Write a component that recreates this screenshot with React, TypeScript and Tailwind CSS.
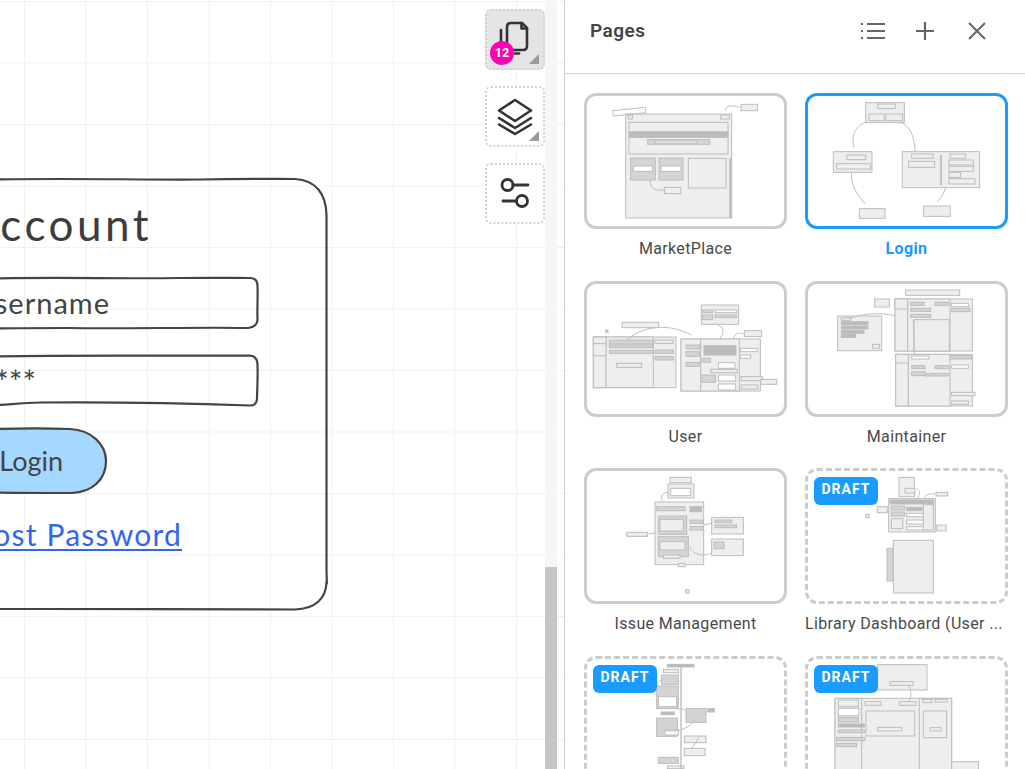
import React from "react";

type Art = {
  ox: number;
  oy: number;
  rects: number[][];
  lines?: string[];
  bars?: number[][];
};

const marketplace: Art = {
  ox: 12,
  oy: 9,
  rects: [
    [137, 72, 318, 312, 1],
    [147, 97, 297, 95, 1],
    [147, 125, 297, 17, 3],
    [203, 149, 186, 14, 2],
    [225, 153, 125, 6, 0],
    [152, 204, 74, 66, 2],
    [160, 228, 58, 16, 0],
    [237, 204, 72, 66, 2],
    [243, 228, 60, 16, 0],
    [325, 205, 113, 89, 1],
    [253, 292, 49, 19, 1],
    [483, 43, 50, 19, 1],
    [145, 75, 12, 12, 1],
    [422, 75, 26, 12, 1],
  ],
  lines: [
    "M98 62 L196 52 L198 68 L100 78 Z",
    "M436 62 C440 45 455 45 478 52",
    "M210 270 C210 300 230 302 252 300",
  ],
  bars: [[451, 205, 451, 384, 6]],
};

const login: Art = {
  ox: 15,
  oy: 9,
  rects: [
    [197, 38, 116, 60, 1],
    [234, 42, 52, 14, 1],
    [207, 72, 46, 20, 1],
    [258, 72, 50, 20, 1],
    [100, 185, 116, 62, 1],
    [141, 195, 56, 14, 1],
    [110, 221, 102, 16, 1],
    [307, 185, 232, 108, 1],
    [335, 192, 65, 13, 1],
    [326, 214, 78, 18, 1],
    [450, 192, 47, 13, 1],
    [447, 210, 73, 15, 1],
    [447, 229, 73, 15, 1],
    [447, 247, 35, 15, 1],
    [447, 266, 78, 16, 1],
    [178, 356, 77, 29, 1],
    [371, 348, 80, 31, 1],
  ],
  lines: [
    "M200 95 C160 110 155 140 162 172",
    "M300 95 C335 110 345 150 345 185",
    "M155 247 C150 290 175 315 195 342",
    "M438 290 C432 310 425 320 412 335",
  ],
  bars: [[423, 195, 423, 285, 5]],
};

const user: Art = {
  ox: 12,
  oy: 18,
  rects: [
    [40, 186, 248, 152, 1],
    [40, 186, 38, 152, 1],
    [78, 186, 142, 152, 1],
    [40, 186, 38, 20, 1],
    [40, 206, 38, 36, 1],
    [88, 195, 130, 12, 2],
    [88, 210, 130, 8, 2],
    [88, 226, 130, 9, 2],
    [110, 265, 75, 12, 1],
    [225, 195, 55, 10, 1],
    [225, 225, 55, 10, 2],
    [225, 245, 55, 10, 2],
    [126, 142, 110, 16, 1],
    [77, 165, 7, 7, 2],
    [303, 192, 238, 156, 1],
    [303, 192, 59, 156, 1],
    [362, 192, 116, 156, 1],
    [372, 212, 96, 28, 3],
    [318, 210, 40, 12, 2],
    [318, 230, 40, 14, 2],
    [318, 262, 40, 12, 2],
    [366, 250, 26, 12, 2],
    [415, 263, 50, 17, 0],
    [392, 283, 80, 10, 1],
    [366, 300, 40, 22, 2],
    [415, 300, 52, 18, 0],
    [415, 327, 52, 18, 0],
    [482, 220, 50, 10, 0],
    [482, 240, 30, 10, 0],
    [364, 90, 112, 58, 1],
    [368, 105, 30, 8, 2],
    [405, 105, 65, 8, 0],
    [405, 120, 65, 8, 2],
    [368, 120, 30, 14, 2],
    [493, 167, 52, 18, 1],
    [483, 305, 65, 12, 1],
    [542, 313, 48, 15, 1],
    [483, 330, 50, 12, 1],
  ],
  lines: [
    "M140 195 C190 150 270 145 335 180",
    "M415 150 C440 165 425 180 420 190",
    "M460 190 C465 175 480 170 492 178",
  ],
};

const maintainer: Art = {
  ox: 675,
  oy: 18,
  rects: [
    [977, 45, 162, 16, 1],
    [884, 72, 44, 24, 1],
    [945, 72, 232, 156, 1],
    [945, 72, 38, 156, 1],
    [983, 72, 127, 156, 1],
    [945, 72, 38, 30, 1],
    [992, 82, 40, 9, 2],
    [1065, 82, 40, 9, 2],
    [992, 100, 60, 9, 2],
    [992, 118, 60, 9, 2],
    [1002, 134, 106, 94, 1],
    [1115, 85, 50, 10, 0],
    [1115, 100, 55, 10, 2],
    [773, 123, 132, 104, 1],
    [784, 128, 28, 8, 1],
    [784, 140, 80, 9, 3],
    [784, 153, 80, 9, 3],
    [784, 166, 68, 9, 3],
    [784, 178, 42, 9, 3],
    [878, 208, 20, 12, 1],
    [947, 238, 230, 155, 1],
    [947, 238, 38, 155, 1],
    [985, 238, 125, 155, 1],
    [947, 238, 38, 26, 1],
    [995, 243, 52, 9, 0],
    [1110, 242, 65, 10, 2],
    [995, 272, 40, 9, 2],
    [1065, 272, 40, 9, 2],
    [995, 290, 40, 12, 2],
    [1035, 295, 70, 8, 2],
    [1115, 270, 50, 10, 0],
    [1115, 352, 70, 10, 1],
    [1115, 378, 50, 10, 1],
  ],
  lines: ["M810 130 C850 115 900 112 945 122", "M1000 135 L1003 238"],
};

const issues: Art = {
  ox: 12,
  oy: 24,
  rects: [
    [270, 52, 64, 16, 1],
    [264, 72, 78, 42, 1],
    [272, 85, 60, 22, 0],
    [225, 126, 146, 188, 1],
    [230, 140, 85, 12, 2],
    [330, 140, 35, 15, 3],
    [235, 168, 85, 55, 2],
    [240, 178, 70, 35, 1],
    [235, 230, 90, 60, 2],
    [240, 245, 75, 25, 1],
    [250, 285, 50, 10, 1],
    [295, 310, 20, 10, 1],
    [330, 180, 40, 10, 2],
    [330, 200, 40, 10, 2],
    [395, 172, 95, 50, 1],
    [405, 180, 50, 8, 2],
    [405, 195, 65, 8, 2],
    [395, 237, 95, 50, 1],
    [402, 246, 30, 20, 2],
    [140, 217, 62, 12, 1],
    [317, 389, 10, 10, 1],
  ],
  lines: [
    "M265 96 C240 100 240 115 250 125",
    "M205 222 L230 218",
    "M330 260 C335 285 370 290 395 280",
    "M370 195 L395 190",
  ],
};

const library: Art = {
  ox: 675,
  oy: 24,
  rects: [
    [957, 52, 46, 58, 1],
    [975, 85, 30, 14, 1],
    [926, 116, 140, 100, 1],
    [930, 120, 130, 12, 3],
    [892, 140, 30, 18, 1],
    [1070, 195, 28, 18, 1],
    [1030, 134, 30, 76, 1],
    [934, 138, 40, 12, 2],
    [934, 156, 40, 12, 2],
    [934, 176, 34, 30, 1],
    [980, 142, 46, 10, 3],
    [980, 160, 50, 10, 0],
    [980, 180, 50, 12, 0],
    [980, 200, 50, 10, 0],
    [1068, 97, 35, 11, 1],
    [857, 163, 10, 10, 1],
    [940, 241, 120, 158, 1],
    [921, 265, 18, 98, 2],
  ],
  lines: ["M1030 115 C1040 105 1045 100 1065 102", "M1010 85 C1022 95 1020 105 1012 115"],
};

const draftA: Art = {
  ox: 12,
  oy: 18,
  rects: [
    [262, 43, 80, 8, 3],
    [250, 58, 45, 10, 1],
    [245, 75, 50, 28, 2],
    [230, 108, 65, 68, 2],
    [235, 140, 55, 30, 0],
    [243, 186, 40, 8, 3],
    [318, 175, 60, 42, 2],
    [383, 176, 20, 10, 3],
    [230, 204, 62, 55, 2],
    [255, 240, 40, 15, 0],
    [313, 258, 65, 20, 1],
    [313, 295, 62, 22, 1],
    [235, 322, 60, 18, 2],
    [262, 348, 50, 8, 1],
  ],
  lines: [
    "M296 178 C305 175 312 178 320 185",
    "M255 242 C290 245 320 240 340 215",
    "M355 262 C350 280 340 285 335 295",
    "M245 90 C238 92 232 98 230 108",
  ],
  bars: [[303, 50, 303, 357, 4]],
};

const draftB: Art = {
  ox: 675,
  oy: 18,
  rects: [
    [893, 44, 148, 76, 1],
    [930, 95, 70, 11, 1],
    [765, 145, 350, 220, 1],
    [765, 145, 80, 220, 1],
    [1018, 145, 97, 220, 1],
    [775, 150, 60, 20, 1],
    [775, 175, 62, 22, 0],
    [775, 202, 60, 14, 2],
    [775, 222, 78, 9, 3],
    [775, 240, 78, 8, 2],
    [770, 262, 85, 10, 2],
    [770, 280, 60, 10, 2],
    [855, 155, 48, 11, 1],
    [958, 155, 50, 11, 1],
    [858, 183, 146, 75, 1],
    [893, 232, 72, 11, 1],
    [1030, 183, 70, 80, 1],
    [1050, 233, 33, 10, 1],
    [1028, 148, 28, 10, 1],
    [1065, 148, 36, 8, 1],
    [1115, 335, 80, 30, 1],
  ],
  lines: ["M985 106 C995 120 995 140 985 155"],
};

const fills = ["#ffffff", "#eeeeee", "#d4d4d4", "#bbbbbb"];

function Thumb({ art }: { art: Art }) {
  return (
    <svg
      viewBox={`${art.ox + 9} ${art.oy + 9} 591 390`}
      preserveAspectRatio="none"
      className="block h-full w-full overflow-hidden blur-[0.5px]"
    >
      {art.rects.map((r, i) => (
        <rect key={i} x={r[0]} y={r[1]} width={r[2]} height={r[3]} fill={fills[r[4]]} stroke="#bdbdbd" strokeWidth={3} />
      ))}
      {art.lines?.map((d, i) => (
        <path key={i} d={d} fill="none" stroke="#bdbdbd" strokeWidth={3} />
      ))}
      {art.bars?.map((b, i) => (
        <line key={i} x1={b[0]} y1={b[1]} x2={b[2]} y2={b[3]} stroke="#bbbbbb" strokeWidth={b[4]} />
      ))}
    </svg>
  );
}

type PageItem = { name: string; art: Art; selected?: boolean; draft?: boolean };

const pages: PageItem[] = [
  { name: "MarketPlace", art: marketplace },
  { name: "Login", art: login, selected: true },
  { name: "User", art: user },
  { name: "Maintainer", art: maintainer },
  { name: "Issue Management", art: issues },
  { name: "Library Dashboard (User ...", art: library, draft: true },
  { name: "", art: draftA, draft: true },
  { name: "", art: draftB, draft: true },
];

function PageCard({ page }: { page: PageItem }) {
  const border = page.selected
    ? "border-[#1a9bff]"
    : page.draft
      ? "border-dashed border-[#cccccc]"
      : "border-[#cccccc]";
  return (
    <div className="h-[187.5px]">
      <div className={`relative h-[136px] overflow-hidden rounded-[12px] border-[3px] bg-white ${border}`}>
        <Thumb art={page.art} />
        {page.draft && (
          <div className="absolute left-[6px] top-[6px] flex h-[28px] w-[64px] items-center justify-center rounded-[6px] bg-[#1a9bff] pb-[3px] text-[14px] font-bold tracking-[1px] text-white">
            DRAFT
          </div>
        )}
      </div>
      <div
        className={`mt-[10px] whitespace-nowrap text-[16px] leading-[20px] tracking-[0.35px] ${
          page.draft ? "text-left" : "text-center"
        } ${page.selected ? "font-bold text-[#1a9bff]" : "text-[#4a4a4a]"}`}
      >
        {page.name}
      </div>
    </div>
  );
}

function ToolButton({ active, corner, children }: { active?: boolean; corner?: boolean; children: React.ReactNode }) {
  return (
    <div
      className={`relative h-[61px] w-[60px] rounded-[6px] border-2 border-dotted border-[#d2d2d2] ${
        active ? "bg-[#e5e5e5]" : "bg-white"
      }`}
    >
      {children}
      {corner && (
        <svg viewBox="0 0 10 10" className="absolute bottom-[4px] right-[4px] h-[10px] w-[10px]">
          <path d="M10 0 V10 H0 Z" fill="#9a9a9a" />
        </svg>
      )}
    </div>
  );
}

function Sketch() {
  return (
    <svg viewBox="0 0 340 520" className="absolute left-0 top-[170px] h-[520px] w-[340px]" fill="none" stroke="#444444" strokeWidth={2.2} strokeLinecap="round">
      <path d="M-4 9.500 C70 8 140 10 200 9.500 C240 8.500 270 9 295 9 C316 10 326 24 326.500 45 C327 130 326 260 326.500 400 C327 420 327 412 326.500 412 C326 428 316 439 295 439.500 C220 440 120 438.500 40 439 C20 439 5 439 -4 439" />
      <path d="M-4 108.500 C60 107 120 109 180 108 C210 107.500 235 108 250 108 C256 108 257.500 112 257.500 116 C258 128 257 140 257.500 150 C257 155 254 157.500 248 158 C200 157 120 159 70 158 C40 158 10 158 -4 158.500" />
      <path d="M-4 186.500 C60 185 140 186 250 185.500 C255 186 257.500 190 257.500 195 C258 210 257 222 257 229 C256.500 234 254 235.500 250 235.500 C180 233 100 232 40 232.500 C20 233 5 235 -4 235" />
      <path d="M-4 259 C30 258 55 258.500 70 259 C92 260 106 275 106 291 C106 310 92 322 72 323 C50 323 20 323 -4 322.500" fill="#a5d8ff" />
    </svg>
  );
}

const hand = "font-['Lato','Noto_Sans',sans-serif] font-normal whitespace-nowrap absolute";

export default function App() {
  return (
    <div className="flex h-[769px] w-[1025px] overflow-hidden bg-white font-['Roboto',sans-serif]">
      <div className="relative h-full w-[564px] shrink-0 overflow-hidden bg-white bg-[linear-gradient(#f1f1f1_1px,transparent_1px),linear-gradient(90deg,#f1f1f1_1px,transparent_1px)] bg-[size:61.5px_61.5px] bg-[position:24px_1px]">
        <Sketch />
        <div className={`${hand} right-[412px] top-[197px] text-[44px] leading-[54px] tracking-[3.5px] text-[#3d3d3d]`}>Account</div>
        <div className={`${hand} right-[454px] top-[285px] text-[29px] leading-[36px] tracking-[1px] text-[#444444]`}>Username</div>
        <div className={`${hand} right-[528px] top-[364px] font-['DejaVu_Sans',sans-serif] text-[32px] leading-[36px] text-[#444444]`}>*****</div>
        <div className={`${hand} right-[501px] top-[443px] text-[27px] leading-[36px] text-[#444444]`}>Login</div>
        <div className={`${hand} right-[382px] top-[515px] text-[30px] leading-[38px] tracking-[1.2px] text-[#3366ee] underline decoration-2 underline-offset-[3px]`}>Lost Password</div>

        <div className="absolute left-[545px] top-0 h-full w-[12px] bg-[#f6f6f6]">
          <div className="absolute bottom-0 left-0 h-[202px] w-full bg-[#c6c6c6]" />
        </div>

        <div className="absolute left-[485px] top-[9px] flex flex-col gap-4">
          <ToolButton active corner>
            <svg viewBox="0 0 60 61" className="absolute -inset-[2px] h-[61px] w-[60px]" fill="none" stroke="#333333" strokeWidth={2.6} strokeLinecap="round" strokeLinejoin="round">
              <path d="M29 14 H37 L42 19 V37 C42 39.500 40.500 41 38 41 H26 C23.500 41 22 39.500 22 37 V18 C22 15.500 23.500 14 26 14 Z" />
              <path d="M36.500 14 V19.500 H42" />
              <path d="M16 21 V36" />
              <path d="M30 44.500 H34" />
            </svg>
            <div className="absolute left-[3px] top-[30px] flex h-[24px] w-[24px] items-center justify-center rounded-full bg-[#ff00b4] text-[12.5px] font-bold leading-none text-white">
              12
            </div>
          </ToolButton>
          <ToolButton corner>
            <svg viewBox="0 0 60 61" className="absolute -inset-[2px] h-[61px] w-[60px]" fill="none" stroke="#333333" strokeWidth={2.6} strokeLinecap="round" strokeLinejoin="round">
              <path d="M30 14 L46 24.500 L30 35 L14 24.500 Z" />
              <path d="M14 32 L30 42 L46 32" />
              <path d="M14 38.500 L30 48 L46 38.500" />
            </svg>
          </ToolButton>
          <ToolButton>
            <svg viewBox="0 0 60 61" className="absolute -inset-[2px] h-[61px] w-[60px]" fill="none" stroke="#333333" strokeWidth={2.8} strokeLinecap="round">
              <circle cx="22.500" cy="22" r="5.500" />
              <path d="M28 22 H43" />
              <circle cx="37" cy="38" r="5.500" />
              <path d="M18 38 H31.500" />
            </svg>
          </ToolButton>
        </div>
      </div>

      <div className="flex h-full flex-1 flex-col overflow-hidden border-l border-[#cfcfcf] bg-white">
        <div className="flex h-[74px] shrink-0 items-center border-b border-[#d4d4d4] pb-[12px] pl-[25px] pr-[38px]">
          <div className="flex-1 pt-[2px] text-[19px] font-semibold tracking-[0.5px] text-[#444444]">Pages</div>
          <svg viewBox="0 0 26 20" className="mr-[29px] h-[20px] w-[26px]" fill="none" stroke="#666666" strokeWidth={2}>
            <path d="M7 3 H25 M7 10 H25 M7 17 H25" />
            <path d="M1 3 H3 M1 10 H3 M1 17 H3" />
          </svg>
          <svg viewBox="0 0 20 20" className="mr-[32px] h-[20px] w-[20px]" fill="none" stroke="#666666" strokeWidth={2.200}>
            <path d="M10 1 V19 M1 10 H19" />
          </svg>
          <svg viewBox="0 0 20 20" className="h-[20px] w-[20px]" fill="none" stroke="#666666" strokeWidth={2}>
            <path d="M2 2 L18 18 M18 2 L2 18" />
          </svg>
        </div>
        <div className="grid grid-cols-[203px_203px] gap-x-[18px] pl-[19px] pt-[19px]">
          {pages.map((p, i) => (
            <PageCard key={i} page={p} />
          ))}
        </div>
      </div>
    </div>
  );
}
